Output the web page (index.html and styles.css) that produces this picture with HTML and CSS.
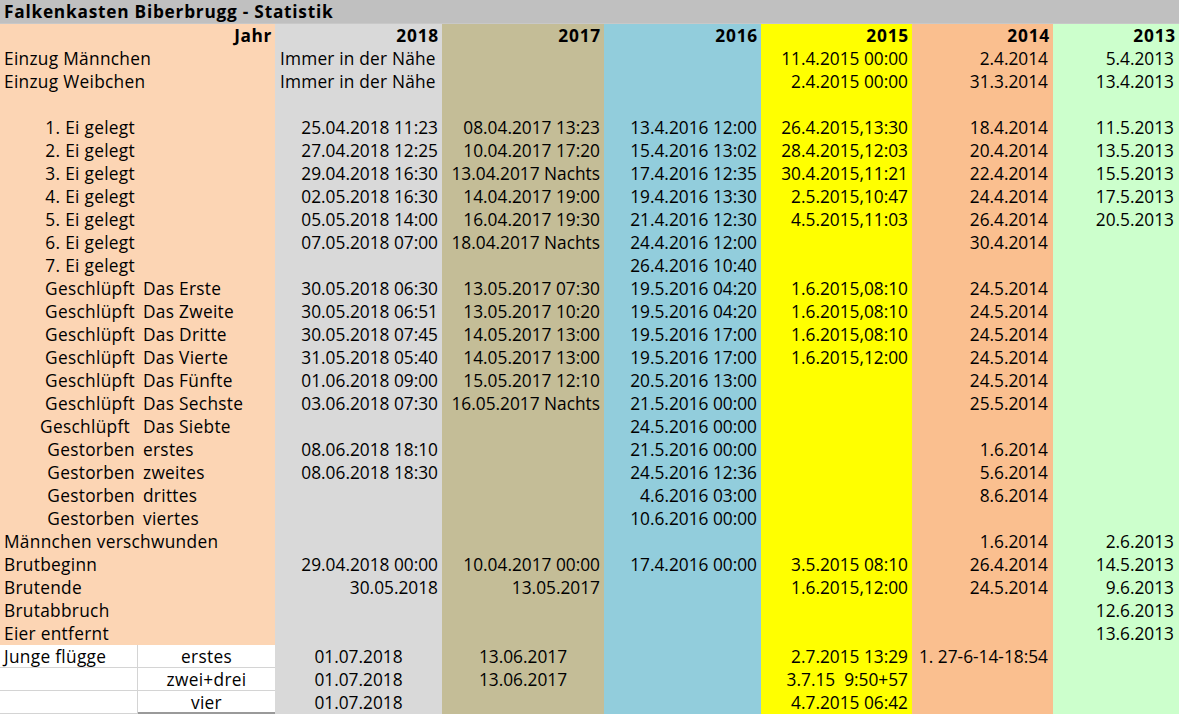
FILE: index.html
```html
<!DOCTYPE html>
<html lang="de">
<head>
<meta charset="utf-8">
<title>Falkenkasten Biberbrugg - Statistik</title>
<link rel="stylesheet" href="styles.css">
</head>
<body>
<div class="title">Falkenkasten Biberbrugg - Statistik</div>
<table class="sheet">
<colgroup>
<col class="w-a"><col class="w-b"><col class="w-18"><col class="w-17"><col class="w-16"><col class="w-15"><col class="w-14"><col class="w-13">
</colgroup>
<tbody>
<tr class="head"><td class="lab"></td><td class="lab r">Jahr</td><td class="y18 r">2018</td><td class="y17 r">2017</td><td class="y16 r">2016</td><td class="y15 r">2015</td><td class="y14 r">2014</td><td class="y13 r">2013</td></tr>
<tr><td class="lab" colspan="2">Einzug Männchen</td><td class="y18 l txt">Immer in der Nähe</td><td class="y17"></td><td class="y16"></td><td class="y15 r">11.4.2015 00:00</td><td class="y14 r">2.4.2014</td><td class="y13 r">5.4.2013</td></tr>
<tr><td class="lab" colspan="2">Einzug Weibchen</td><td class="y18 l txt">Immer in der Nähe</td><td class="y17"></td><td class="y16"></td><td class="y15 r">2.4.2015 00:00</td><td class="y14 r">31.3.2014</td><td class="y13 r">13.4.2013</td></tr>
<tr><td class="lab" colspan="2"></td><td class="y18"></td><td class="y17"></td><td class="y16"></td><td class="y15"></td><td class="y14"></td><td class="y13"></td></tr>
<tr><td class="lab ra">1. Ei gelegt</td><td class="lab"></td><td class="y18 r">25.04.2018 11:23</td><td class="y17 r">08.04.2017 13:23</td><td class="y16 r">13.4.2016 12:00</td><td class="y15 r">26.4.2015,13:30</td><td class="y14 r">18.4.2014</td><td class="y13 r">11.5.2013</td></tr>
<tr><td class="lab ra">2. Ei gelegt</td><td class="lab"></td><td class="y18 r">27.04.2018 12:25</td><td class="y17 r">10.04.2017 17:20</td><td class="y16 r">15.4.2016 13:02</td><td class="y15 r">28.4.2015,12:03</td><td class="y14 r">20.4.2014</td><td class="y13 r">13.5.2013</td></tr>
<tr><td class="lab ra">3. Ei gelegt</td><td class="lab"></td><td class="y18 r">29.04.2018 16:30</td><td class="y17 r">13.04.2017 Nachts</td><td class="y16 r">17.4.2016 12:35</td><td class="y15 r">30.4.2015,11:21</td><td class="y14 r">22.4.2014</td><td class="y13 r">15.5.2013</td></tr>
<tr><td class="lab ra">4. Ei gelegt</td><td class="lab"></td><td class="y18 r">02.05.2018 16:30</td><td class="y17 r">14.04.2017 19:00</td><td class="y16 r">19.4.2016 13:30</td><td class="y15 r">2.5.2015,10:47</td><td class="y14 r">24.4.2014</td><td class="y13 r">17.5.2013</td></tr>
<tr><td class="lab ra">5. Ei gelegt</td><td class="lab"></td><td class="y18 r">05.05.2018 14:00</td><td class="y17 r">16.04.2017 19:30</td><td class="y16 r">21.4.2016 12:30</td><td class="y15 r">4.5.2015,11:03</td><td class="y14 r">26.4.2014</td><td class="y13 r">20.5.2013</td></tr>
<tr><td class="lab ra">6. Ei gelegt</td><td class="lab"></td><td class="y18 r">07.05.2018 07:00</td><td class="y17 r">18.04.2017 Nachts</td><td class="y16 r">24.4.2016 12:00</td><td class="y15"></td><td class="y14 r">30.4.2014</td><td class="y13"></td></tr>
<tr><td class="lab ra">7. Ei gelegt</td><td class="lab"></td><td class="y18"></td><td class="y17"></td><td class="y16 r">26.4.2016 10:40</td><td class="y15"></td><td class="y14"></td><td class="y13"></td></tr>
<tr><td class="lab ra">Geschlüpft</td><td class="lab lb">Das Erste</td><td class="y18 r">30.05.2018 06:30</td><td class="y17 r">13.05.2017 07:30</td><td class="y16 r">19.5.2016 04:20</td><td class="y15 r">1.6.2015,08:10</td><td class="y14 r">24.5.2014</td><td class="y13"></td></tr>
<tr><td class="lab ra">Geschlüpft</td><td class="lab lb">Das Zweite</td><td class="y18 r">30.05.2018 06:51</td><td class="y17 r">13.05.2017 10:20</td><td class="y16 r">19.5.2016 04:20</td><td class="y15 r">1.6.2015,08:10</td><td class="y14 r">24.5.2014</td><td class="y13"></td></tr>
<tr><td class="lab ra">Geschlüpft</td><td class="lab lb">Das Dritte</td><td class="y18 r">30.05.2018 07:45</td><td class="y17 r">14.05.2017 13:00</td><td class="y16 r">19.5.2016 17:00</td><td class="y15 r">1.6.2015,08:10</td><td class="y14 r">24.5.2014</td><td class="y13"></td></tr>
<tr><td class="lab ra">Geschlüpft</td><td class="lab lb">Das Vierte</td><td class="y18 r">31.05.2018 05:40</td><td class="y17 r">14.05.2017 13:00</td><td class="y16 r">19.5.2016 17:00</td><td class="y15 r">1.6.2015,12:00</td><td class="y14 r">24.5.2014</td><td class="y13"></td></tr>
<tr><td class="lab ra">Geschlüpft</td><td class="lab lb">Das Fünfte</td><td class="y18 r">01.06.2018 09:00</td><td class="y17 r">15.05.2017 12:10</td><td class="y16 r">20.5.2016 13:00</td><td class="y15"></td><td class="y14 r">24.5.2014</td><td class="y13"></td></tr>
<tr><td class="lab ra">Geschlüpft</td><td class="lab lb">Das Sechste</td><td class="y18 r">03.06.2018 07:30</td><td class="y17 r">16.05.2017 Nachts</td><td class="y16 r">21.5.2016 00:00</td><td class="y15"></td><td class="y14 r">25.5.2014</td><td class="y13"></td></tr>
<tr><td class="lab ra ra-wide">Geschlüpft</td><td class="lab lb">Das Siebte</td><td class="y18"></td><td class="y17"></td><td class="y16 r">24.5.2016 00:00</td><td class="y15"></td><td class="y14"></td><td class="y13"></td></tr>
<tr><td class="lab ra">Gestorben</td><td class="lab lb">erstes</td><td class="y18 r">08.06.2018 18:10</td><td class="y17"></td><td class="y16 r">21.5.2016 00:00</td><td class="y15"></td><td class="y14 r">1.6.2014</td><td class="y13"></td></tr>
<tr><td class="lab ra">Gestorben</td><td class="lab lb">zweites</td><td class="y18 r">08.06.2018 18:30</td><td class="y17"></td><td class="y16 r">24.5.2016 12:36</td><td class="y15"></td><td class="y14 r">5.6.2014</td><td class="y13"></td></tr>
<tr><td class="lab ra">Gestorben</td><td class="lab lb">drittes</td><td class="y18"></td><td class="y17"></td><td class="y16 r">4.6.2016 03:00</td><td class="y15"></td><td class="y14 r">8.6.2014</td><td class="y13"></td></tr>
<tr><td class="lab ra">Gestorben</td><td class="lab lb">viertes</td><td class="y18"></td><td class="y17"></td><td class="y16 r">10.6.2016 00:00</td><td class="y15"></td><td class="y14"></td><td class="y13"></td></tr>
<tr><td class="lab" colspan="2">Männchen verschwunden</td><td class="y18"></td><td class="y17"></td><td class="y16"></td><td class="y15"></td><td class="y14 r">1.6.2014</td><td class="y13 r">2.6.2013</td></tr>
<tr><td class="lab" colspan="2">Brutbeginn</td><td class="y18 r">29.04.2018 00:00</td><td class="y17 r">10.04.2017 00:00</td><td class="y16 r">17.4.2016 00:00</td><td class="y15 r">3.5.2015 08:10</td><td class="y14 r">26.4.2014</td><td class="y13 r">14.5.2013</td></tr>
<tr><td class="lab" colspan="2">Brutende</td><td class="y18 r">30.05.2018</td><td class="y17 r">13.05.2017</td><td class="y16"></td><td class="y15 r">1.6.2015,12:00</td><td class="y14 r">24.5.2014</td><td class="y13 r">9.6.2013</td></tr>
<tr><td class="lab" colspan="2">Brutabbruch</td><td class="y18"></td><td class="y17"></td><td class="y16"></td><td class="y15"></td><td class="y14"></td><td class="y13 r">12.6.2013</td></tr>
<tr><td class="lab" colspan="2">Eier entfernt</td><td class="y18"></td><td class="y17"></td><td class="y16"></td><td class="y15"></td><td class="y14"></td><td class="y13 r">13.6.2013</td></tr>
<tr><td class="wa lab-w">Junge flügge</td><td class="wb c">erstes</td><td class="y18 c">01.07.2018</td><td class="y17 c">13.06.2017</td><td class="y16"></td><td class="y15 r">2.7.2015 13:29</td><td class="y14 r">1. 27-6-14-18:54</td><td class="y13"></td></tr>
<tr><td class="wa"></td><td class="wb c">zwei+drei</td><td class="y18 c">01.07.2018</td><td class="y17 c">13.06.2017</td><td class="y16"></td><td class="y15 r pre">3.7.15  9:50+57</td><td class="y14"></td><td class="y13"></td></tr>
<tr><td class="wa last"></td><td class="wb c last-b">vier</td><td class="y18 c">01.07.2018</td><td class="y17"></td><td class="y16"></td><td class="y15 r">4.7.2015 06:42</td><td class="y14"></td><td class="y13"></td></tr>
</tbody>
</table>
</body>
</html>
```

FILE: styles.css
```css
html, body {
  margin: 0;
  padding: 0;
  background: #ffffff;
}

body {
  width: 1179px;
  height: 714px;
  overflow: hidden;
  font-family: "Open Sans", "Noto Sans", "DejaVu Sans", sans-serif;
  font-size: 17.3px;
  color: #000;
}

.title {
  height: 23px;
  line-height: 23px;
  background: #c0c0c0;
  font-weight: 700;
  letter-spacing: 0.75px;
  padding-left: 4px;
  white-space: nowrap;
  border-bottom: 1px solid #c8c8c8;
}

.sheet {
  border-collapse: collapse;
  border-spacing: 0;
  table-layout: fixed;
  width: 1179px;
}

.w-a { width: 138px; }
.w-b { width: 137px; }
.w-18 { width: 167px; }
.w-17 { width: 162px; }
.w-16 { width: 157px; }
.w-15 { width: 151px; }
.w-14 { width: 141px; }
.w-13 { width: 126px; }

.sheet td {
  height: 23px;
  padding: 0 4px;
  line-height: 23px;
  white-space: nowrap;
  overflow: visible;
  vertical-align: bottom;
  box-sizing: border-box;
}

.sheet td.lab {
  background: #fcd5b4;
  letter-spacing: 0.3px;
}

.y18 { background: #d9d9d9; }
.y17 { background: #c4bd97; }
.y16 { background: #92cddc; }
.y15 { background: #ffff00; }
.y14 { background: #fabf8f; }
.y13 { background: #ccffcc; }

.r { text-align: right; }
.l { text-align: left; }
.c { text-align: center; }
.pre { white-space: pre !important; }

.sheet td.txt { padding-left: 5px; letter-spacing: 0.2px; }

.sheet td.y14.r, .sheet td.y13.r { padding-right: 5px; }

.sheet td.ra {
  text-align: right;
  padding-right: 3px;
}
.sheet td.ra-wide { padding-right: 8px; }
.sheet td.lb { padding-left: 5px; }

.head td {
  font-weight: 700;
  letter-spacing: 0.8px;
}
.sheet .head td.lab.r { padding-right: 3px; letter-spacing: 0.6px; }
.sheet .head td.r { padding-right: 3px; }

.sheet td.wa, .sheet td.wb {
  background: #ffffff;
  letter-spacing: 0.3px;
  box-shadow: inset 0 -1px 0 #d4d4d4;
}
.sheet td.wa {
  box-shadow: inset -1px -1px 0 #d4d4d4;
}
.sheet td.lab-w { padding-left: 4px; }
.sheet td.wb.last-b {
  box-shadow: inset 0 -2px 0 #9a9a9a;
}
```
